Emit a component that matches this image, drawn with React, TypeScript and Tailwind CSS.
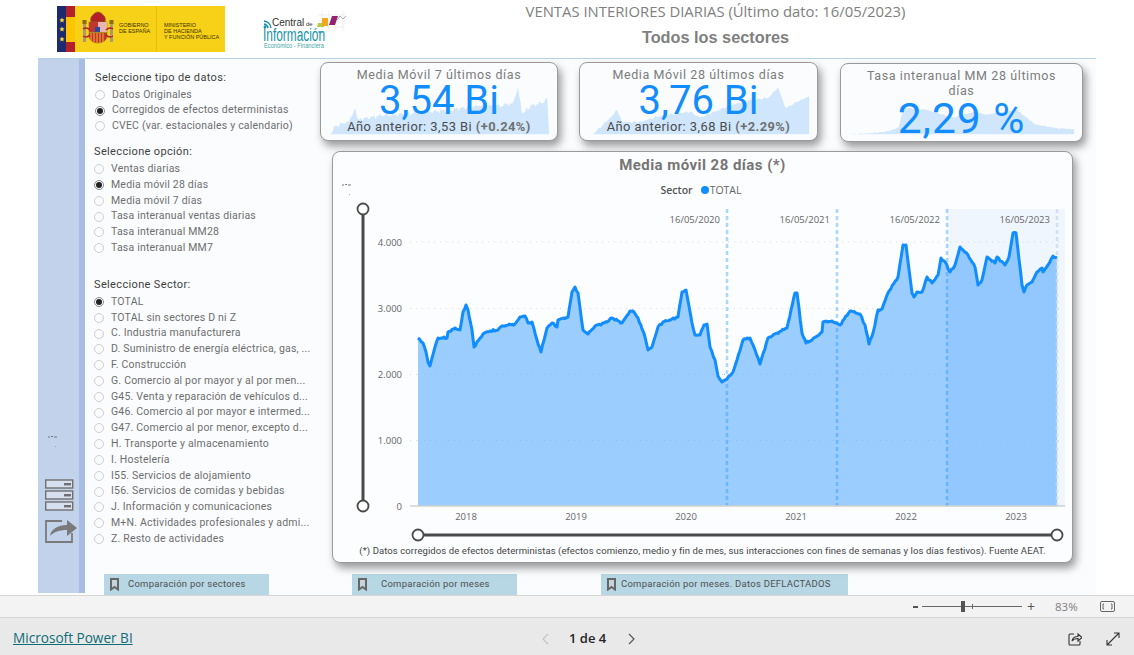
import React from "react";

type P = [number, number];

function jag(pts: P[], amp: number, step: number, seed: number): P[] {
  const out: P[] = [];
  for (let i = 0; i < pts.length - 1; i++) {
    const [x0, y0] = pts[i];
    const [x1, y1] = pts[i + 1];
    const n = Math.max(1, Math.round((x1 - x0) / step));
    for (let k = 0; k < n; k++) {
      const t = k / n;
      const x = x0 + (x1 - x0) * t;
      const noise = k === 0 ? 0 : (Math.sin(x * 2.3 + seed) + Math.sin(x * 5.1 + seed * 2)) * amp;
      out.push([+x.toFixed(1), +(y0 + (y1 - y0) * t + noise).toFixed(1)]);
    }
  }
  out.push(pts[pts.length - 1]);
  return out;
}
const str = (a: P[]) => a.map((p) => p.join(",")).join(" ");

const lineRaw: P[] = [
  [418, 338], [423, 343], [426, 352], [428, 362], [430, 366], [432, 358], [435, 347], [438, 338], [447, 338], [448, 332], [455, 328], [460, 330], [463, 312], [466, 305], [468, 310], [472, 330], [474, 347], [483, 334], [490, 331], [498, 330], [502, 326], [515, 324], [520, 317], [525, 316], [528, 323], [532, 322], [537, 340], [541, 352], [547, 328], [552, 323], [557, 327], [558, 320], [568, 317], [572, 292], [575, 287], [578, 293], [583, 330], [588, 334], [595, 326], [607, 322], [612, 318], [622, 323], [630, 311], [633, 311], [638, 318], [645, 337], [648, 350], [652, 347], [658, 327], [663, 322], [670, 320], [678, 317], [682, 292], [686, 290], [692, 323], [695, 335], [700, 335], [704, 325], [707, 324], [710, 347], [715, 360], [718, 376], [722, 382], [727, 379], [733, 372], [737, 360], [743, 340], [750, 338], [755, 350], [760, 364], [768, 338], [777, 333], [787, 328], [791, 310], [795, 293], [797, 293], [802, 333], [806, 343], [812, 340], [822, 332], [823, 322], [832, 321], [840, 325], [850, 311], [860, 314], [865, 325], [869, 344], [873, 333], [878, 310], [882, 309], [888, 293], [898, 277], [903, 245], [906, 245], [912, 293], [914, 297], [917, 292], [922, 292], [927, 277], [932, 283], [938, 275], [941, 258], [945, 262], [950, 272], [955, 265], [960, 247], [968, 255], [975, 267], [978, 285], [982, 280], [987, 257], [995, 263], [997, 257], [1005, 265], [1009, 257], [1013, 233], [1016, 233], [1022, 285], [1024, 292], [1027, 285], [1032, 282], [1037, 272], [1042, 268], [1043, 272], [1048, 265], [1053, 256], [1057, 258],
];
const line = jag(lineRaw, 0.5, 1.5, 1.3);
const area = str([[418, 506], ...line, [1057, 506]]);

const spark1 = jag([[327, 135], [333, 127], [345, 122], [350, 116], [353, 108], [356, 120], [380, 116], [420, 113], [450, 110], [480, 106], [505, 106], [515, 102], [520, 87], [524, 114], [535, 105], [545, 103], [550, 98], [552, 135]], 1.5, 1.5, 2);
const spark2 = jag([[590, 135], [600, 126], [610, 116], [615, 110], [620, 123], [640, 122], [660, 116], [690, 112], [700, 118], [730, 106], [750, 100], [770, 98], [780, 87], [785, 100], [788, 108], [800, 102], [812, 96], [812, 135]], 0.7, 2, 3);
const spark3 = jag([[848, 135], [870, 134], [887, 132], [897, 128], [902, 108], [925, 110], [953, 118], [975, 112], [987, 115], [1005, 112], [1018, 110], [1037, 125], [1060, 129], [1077, 130], [1077, 136]], 0.3, 2, 4);

const font = { fontFamily: "Roboto, 'Liberation Sans', sans-serif" };

function Radio({ label, on }: { label: string; on?: boolean }) {
  return (
    <div className="flex h-[15.8px] items-center gap-[7px] whitespace-nowrap text-[10.5px] leading-none tracking-[0.2px] text-[#6e6e6e]">
      <span className={`flex h-[10px] w-[10px] shrink-0 items-center justify-center rounded-full border ${on ? "border-[#8a8a8a]" : "border-[#cfcfcf]"}`}>
        {on && <span className="h-[6px] w-[6px] rounded-full bg-[#222]" />}
      </span>
      {label}
    </div>
  );
}

function Heading({ children }: { children: React.ReactNode }) {
  return <div className="h-[16px] text-[11px] font-normal leading-[16px] tracking-[0.35px] text-[#3f3f3f]">{children}</div>;
}

function Kpi({ title, value, prev, pct, spark, box, w, third }: { title: string; value: string; prev?: string; pct?: string; spark: P[]; box: string; w: string; third?: boolean }) {
  return (
    <div className={`relative ${w} h-[79px] overflow-hidden rounded-[8px] border border-[#9a9a9a] bg-[#fbfcfe] shadow-[3px_5px_8px_rgba(0,0,0,0.4)]`}>
      <svg className="absolute inset-0 h-full w-full" viewBox={box}>
        <polygon points={str([...spark, [spark[spark.length - 1][0], 135], [spark[0][0], 135]])} fill="#cfe6fc" />
      </svg>
      <div className={`relative flex flex-col items-center ${third ? "px-5 pt-[4px]" : "pt-[4px]"}`}>
        <div className="text-center text-[12.5px] font-normal leading-[15px] tracking-[0.6px] text-[#7c7c7c]">{title}</div>
        {third ? (
          <div className="text-[42.5px] leading-[42px] tracking-[1px] text-[#118dff]">{value}</div>
        ) : (
          <div className="mt-[1px] text-[40px] leading-[36px] tracking-[0px] text-[#118dff]">{value}</div>
        )}
        {prev && (
          <div className="text-[12.9px] leading-[15px] tracking-[0.45px] text-[#4a4a4a]">
            {prev} <span className="font-bold text-[#707070]">{pct}</span>
          </div>
        )}
      </div>
    </div>
  );
}

function Bookmark({ label, w, ml, tl }: { label: string; w: string; ml: string; tl: string }) {
  return (
    <div className={`flex h-[21px] ${w} ${ml} items-center bg-[#b7d7e5] pl-[6px]`}>
      <svg width="9" height="13" viewBox="0 0 9 13" className="shrink-0">
        <path d="M1 1h7v10.5L4.5 9 1 11.5z" fill="#c6d4dc" stroke="#666" strokeWidth="2" />
      </svg>
      <span className={`${tl} whitespace-nowrap text-[9.5px] font-normal tracking-[0.25px] text-[#4f4f4f]`}>{label}</span>
    </div>
  );
}

function GovLogo() {
  return (
    <div className="relative h-[46px] w-[168px] shrink-0 bg-[#f7d117]">
      <svg className="absolute inset-0" width="168" height="46" viewBox="57 6 168 46">
        <rect x="57" y="6" width="9" height="46" fill="#1c2a6e" />
        <rect x="66" y="6" width="9" height="46" fill="#b3202a" />
        <rect x="66" y="17" width="9" height="25" fill="#fdc400" />
        <path d="M62 17.5l.8 1.8 1.8.2-1.4 1.2.5 1.8-1.7-1-1.7 1 .5-1.8-1.4-1.2 1.8-.2zM62 26.5l.8 1.8 1.8.2-1.4 1.2.5 1.8-1.7-1-1.7 1 .5-1.8-1.4-1.2 1.8-.2zM62 36.5l.8 1.8 1.8.2-1.4 1.2.5 1.8-1.7-1-1.7 1 .5-1.8-1.4-1.2 1.8-.2z" fill="#fdd835" />
        <path d="M91 22c-1-3 0-6 2-7 1-2 4-3 5-3 1 0 4 1 5 3 2 1 3 4 2 7z" fill="#b3202a" stroke="#8a6a14" strokeWidth=".7" />
        <path d="M89 22h18v14c0 4-4 7-9 7s-9-3-9-7z" fill="#c4352e" stroke="#8a6a14" strokeWidth=".5" />
        <rect x="98" y="22" width="9" height="10" fill="#e8b6b0" />
        <rect x="89" y="32" width="18" height="1" fill="#a78a22" />
        <path d="M91 33v8M94 33v9M97 33v10M100 33v10M103 33v9" stroke="#f2c230" strokeWidth=".9" />
        <rect x="95" y="27" width="5" height="5" fill="#2d4a9a" />
        <rect x="83" y="24" width="3" height="18" fill="#a89a6a" />
        <rect x="110" y="24" width="3" height="18" fill="#a89a6a" />
        <rect x="82.5" y="20" width="4" height="4" fill="#8a6a14" />
        <rect x="109.5" y="20" width="4" height="4" fill="#8a6a14" />
        <path d="M83 29c3-2 5-1 7 1M113 29c-3-2-5-1-7 1M83 36c3 2 5 1 7-1M113 36c-3 2-5 1-7-1" stroke="#b3202a" strokeWidth="1.5" fill="none" />
        <rect x="156" y="6" width=".7" height="46" fill="#e6b800" />
      </svg>
      <div className="absolute left-[62px] top-[16px] text-[5.5px] leading-[6px] text-[#3a3000]" style={{ fontFamily: "'Liberation Sans', sans-serif" }}>
        GOBIERNO<br />DE ESPAÑA
      </div>
      <div className="absolute left-[107px] top-[16px] text-[5.5px] leading-[6.2px] text-[#3a3000]" style={{ fontFamily: "'Liberation Sans', sans-serif" }}>
        MINISTERIO<br />DE HACIENDA<br />Y FUNCIÓN PÚBLICA
      </div>
    </div>
  );
}

function CentralLogo() {
  return (
    <div className="relative ml-[38px] h-[42px] w-[84px] shrink-0 self-end" style={{ fontFamily: "'Liberation Sans', sans-serif" }}>
      <svg className="absolute inset-0" width="84" height="42" viewBox="263 10 84 42">
        <g stroke="#e6e6e6" strokeWidth=".6">
          <path d="M322 11v20M329 11v20M336 11v20M343 11v20M318 15h27M318 21h27M318 27h27" />
        </g>
        <path d="M317 27l1-4h6v4z" fill="#b7cf3a" />
        <path d="M322 26l0-8h6v8z" fill="#f2a81d" />
        <path d="M329 25l3-9h6l-3 9z" fill="#94206e" />
        <path d="M337 20l3-4 3 3 3-3" fill="none" stroke="#aaa" strokeWidth="1" />
        <path d="M264 21a8 8 0 0 1 7 7M264 24a5 5 0 0 1 4 4" fill="none" stroke="#1792a8" strokeWidth="1.4" />
        <circle cx="265" cy="27" r="1.4" fill="#1792a8" />
        <path d="M318 32h5" stroke="#1792a8" strokeWidth="1" />
      </svg>
      <span className="absolute left-[9px] top-[8px] h-[10px] whitespace-nowrap text-[10px] leading-[10px] text-[#333]">
        Central<span className="text-[6px]"> de</span>
      </span>
      <span className="absolute left-0 top-[18px] h-[14px] origin-left scale-x-[0.66] whitespace-nowrap text-[18px] font-normal leading-[14px] text-[#1792a8]">
        Información
      </span>
      <span className="absolute left-[1px] top-[32px] h-[7px] origin-left scale-x-[0.76] whitespace-nowrap text-[7.5px] leading-[7px] text-[#3fa7a7]">
        Económico - Financiera
      </span>
    </div>
  );
}

const yTicks: [string, number][] = [["4.000", 242], ["3.000", 308.5], ["2.000", 374.5], ["1.000", 440.5], ["0", 506]];
const years: [string, number][] = [["2018", 466], ["2019", 576], ["2020", 686], ["2021", 796], ["2022", 906], ["2023", 1016]];
const marks: [string, number][] = [["16/05/2020", 727], ["16/05/2021", 837], ["16/05/2022", 947], ["16/05/2023", 1057]];

const sectors = [
  "TOTAL", "TOTAL sin sectores D ni Z", "C. Industria manufacturera", "D. Suministro de energía eléctrica, gas, ...", "F. Construcción", "G. Comercio al por mayor y al por men...", "G45. Venta y reparación de vehículos d...", "G46. Comercio al por mayor e intermed...", "G47. Comercio al por menor, excepto d...", "H. Transporte y almacenamiento", "I. Hostelería", "I55. Servicios de alojamiento", "I56. Servicios de comidas y bebidas", "J. Información y comunicaciones", "M+N. Actividades profesionales y admi...", "Z. Resto de actividades",
];

function Chart() {
  const axis = { fontFamily: "'Open Sans', sans-serif", fontSize: 9.5, fill: "#666" };
  return (
    <svg width="739" height="345" viewBox="333 200 739 345" className="block">
      <defs>
        <clipPath id="hl"><rect x="947" y="200" width="118" height="310" /></clipPath>
      </defs>
      <rect x="947" y="209" width="118" height="297" fill="#eff6fe" />
      {yTicks.slice(0, 4).map(([l, y]) => (
        <line key={l} x1="410" x2="1062" y1={y} y2={y} stroke="#d9d9d9" strokeWidth="1" strokeDasharray="1 5" />
      ))}
      <polygon points={area} fill="#9bcdfe" />
      <polygon points={area} fill="#93c8fe" clipPath="url(#hl)" />
      {yTicks.slice(2, 4).map(([l, y]) => (
        <line key={l} x1="418" x2="1057" y1={y} y2={y} stroke="#8fc0f0" strokeWidth="1" strokeDasharray="1 5" />
      ))}
      {marks.map(([l, x], i) => (
        <g key={l}>
          <line x1={x} x2={x} y1="209" y2="506" stroke={i === 3 ? "#c9dcef" : "#118dff"} strokeOpacity={i === 3 ? 0.8 : 0.35} strokeWidth="2.5" strokeDasharray="4 3" />
          <text x={x - 7} y="223" textAnchor="end" style={axis}>{l}</text>
        </g>
      ))}
      <polyline points={str(line)} fill="none" stroke="#118dff" strokeWidth="3" strokeLinejoin="round" />
      <line x1="410" x2="1065" y1="506" y2="506" stroke="#cfcfcf" strokeWidth="1.5" />
      {yTicks.map(([l, y]) => (
        <text key={l} x="402" y={y + 3.5} textAnchor="end" style={axis}>{l}</text>
      ))}
      {years.map(([l, x]) => (
        <text key={l} x={x} y="519.5" textAnchor="middle" style={axis}>{l}</text>
      ))}
      <line x1="363" x2="363" y1="209" y2="506" stroke="#4a4a4a" strokeWidth="3" />
      <circle cx="363" cy="209" r="5.5" fill="#fff" stroke="#4a4a4a" strokeWidth="1.8" />
      <circle cx="363" cy="506" r="5.5" fill="#fff" stroke="#4a4a4a" strokeWidth="1.8" />
      <line x1="418" x2="1057" y1="535" y2="535" stroke="#4a4a4a" strokeWidth="3" />
      <circle cx="418" cy="535" r="5.5" fill="#fff" stroke="#4a4a4a" strokeWidth="1.8" />
      <circle cx="1057" cy="535" r="5.5" fill="#fff" stroke="#4a4a4a" strokeWidth="1.8" />
    </svg>
  );
}

function Speck() {
  return (
    <svg width="10" height="14" viewBox="0 0 10 14" className="block">
      <path d="M0 2h2M3 1.5h2M6 2h3" stroke="#777" strokeWidth="1" />
      <rect x="7" y="11" width="1" height="1" fill="#aaa" />
    </svg>
  );
}

export default function App() {
  return (
    <div className="flex h-[655px] w-[1134px] flex-col overflow-hidden bg-white" style={font}>
      <header className="flex h-[58px] shrink-0">
        <div className="flex h-[52px] items-start pl-[57px] pt-[6px]">
          <GovLogo />
          <CentralLogo />
        </div>
        <div className="ml-[178px] flex w-[381px] flex-col items-center" style={{ fontFamily: "'Open Sans', sans-serif" }}>
          <div className="h-[22px] whitespace-nowrap text-[14.85px] leading-[22px] text-[#808080]">VENTAS INTERIORES DIARIAS (Último dato: 16/05/2023)</div>
          <div className="mt-[5px] whitespace-nowrap text-[16.3px] font-bold leading-[20px] text-[#7f7f7f]" style={{ fontFamily: "'Liberation Sans', sans-serif" }}>Todos los sectores</div>
        </div>
      </header>

      <main className="ml-[38px] flex h-[537px] w-[1058px] shrink-0 border-t border-[#b5d3ea] bg-[#fbfcfe]">
        <aside className="flex h-[534px] w-[47px] shrink-0 flex-col items-start border-r-[6px] border-[#a7bde3] bg-[#c1d2ea] pl-[7px]">
          <div className="ml-[3px] mt-[376px]"><Speck /></div>
          <svg width="34" height="66" viewBox="45 481 34 66" className="mt-[30px]">
            {[482, 493, 504].map((y) => (
              <g key={y}>
                <rect x="45.7" y={y} width="27" height="8" fill="#d6e0ef" stroke="#6f6f6f" strokeWidth="1.4" />
                <rect x="64" y={y + 3} width="7" height="2.4" fill="#6f6f6f" />
              </g>
            ))}
            <path d="M62 523H46v21h26v-9" fill="none" stroke="#7a7a7a" strokeWidth="1.8" />
            <path d="M50 538c1-7 8-11 17-11v-5l10 8-10 8v-6c-8 0-13 2-17 6z" fill="#7a7a7a" />
          </svg>
        </aside>

        <div className="flex min-w-0 flex-1 flex-col">
          <div className="flex h-[514px] shrink-0">
            <section className="flex w-[235px] shrink-0 flex-col pl-[10px] pt-[11px]">
              <Heading>Seleccione tipo de datos:</Heading>
              <div className="mt-[1px]">
                <Radio label="Datos Originales" />
                <Radio label="Corregidos de efectos deterministas" on />
                <Radio label="CVEC (var. estacionales y calendario)" />
              </div>
              <div className="mt-[10px] -ml-[1px]"><Heading>Seleccione opción:</Heading></div>
              <div className="-ml-[1px] mt-[1px]">
                {["Ventas diarias", "Media móvil 28 días", "Media móvil 7 días", "Tasa interanual ventas diarias", "Tasa interanual MM28", "Tasa interanual MM7"].map((l, i) => (
                  <Radio key={l} label={l} on={i === 1} />
                ))}
              </div>
              <div className="-ml-[1px] mt-[21px]"><Heading>Seleccione Sector:</Heading></div>
              <div className="-ml-[1px] mt-[1px]">
                {sectors.map((l, i) => <Radio key={l} label={l} on={i === 0} />)}
              </div>
            </section>

            <section className="flex min-w-0 flex-1 flex-col pt-[3px]">
              <div className="flex items-start">
                <Kpi w="w-[238px]" box="320 62 238 79" title="Media Móvil 7 últimos días" value="3,54 Bi" prev="Año anterior: 3,53 Bi" pct="(+0.24%)" spark={spark1} />
                <div className="ml-[21px]">
                  <Kpi w="w-[239px]" box="579 62 239 79" title="Media Móvil 28 últimos días" value="3,76 Bi" prev="Año anterior: 3,68 Bi" pct="(+2.29%)" spark={spark2} />
                </div>
                <div className="ml-[22px] mt-[1px]">
                  <Kpi third w="w-[243px]" box="840 63 243 79" title="Tasa interanual MM 28 últimos días" value="2,29 %" spark={spark3} />
                </div>
              </div>
              <div className="relative ml-[12px] mt-[9px] h-[412px] w-[741px] rounded-[8px] border border-[#9a9a9a] bg-[#fcfdff] shadow-[3px_5px_9px_rgba(0,0,0,0.4)]">
                <div className="absolute left-[9px] top-[31px]"><Speck /></div>
                <div className="pt-[3px] text-center text-[15px] font-bold leading-[20px] tracking-[0.45px] text-[#757575]">Media móvil 28 días (*)</div>
                <div className="mt-[7px] flex h-[18px] items-start justify-center gap-[4px] pr-[3px] text-[10.5px] leading-[16px] text-[#666]" style={{ fontFamily: "'Open Sans', sans-serif" }}>
                  <span className="mr-[4px] font-semibold text-[#555]">Sector</span>
                  <span className="mt-[4px] h-[8px] w-[8px] rounded-full bg-[#118dff]" />
                  <span className="-ml-[3px]">TOTAL</span>
                </div>
                <Chart />
                <div className="-mt-[1px] whitespace-nowrap text-center text-[9.5px] leading-[14px] tracking-[0.09px] text-[#444]">
                  (*) Datos corregidos de efectos deterministas (efectos comienzo, medio y fin de mes, sus interacciones con fines de semanas y los días festivos). Fuente AEAT.
                </div>
              </div>
            </section>
          </div>
          <div className="mt-[1px] flex">
            <Bookmark w="w-[165px]" ml="ml-[19px]" tl="ml-[9px]" label="Comparación por sectores" />
            <Bookmark w="w-[165px]" ml="ml-[83px]" tl="ml-[14px]" label="Comparación por meses" />
            <Bookmark w="w-[247px]" ml="ml-[84px]" tl="ml-[5px]" label="Comparación por meses. Datos DEFLACTADOS" />
          </div>
        </div>
      </main>

      <div className="flex h-[23px] shrink-0 items-center border-y border-[#d6d6d6] bg-[#f3f3f3] pl-[913px]" style={{ fontFamily: "'Open Sans', sans-serif" }}>
        <span className="h-[2px] w-[5px] bg-[#555]" />
        <div className="relative ml-[4px] h-[1px] w-[100px] bg-[#666]">
          <span className="absolute left-[39px] top-[-5px] h-[11px] w-[4px] bg-[#555]" />
          <span className="absolute left-[50px] top-[-2px] h-[5px] w-[1px] bg-[#666]" />
        </div>
        <span className="ml-[5px] text-[14px] leading-none text-[#555]">+</span>
        <span className="ml-[20px] text-[11.5px] text-[#808080]">83%</span>
        <svg width="15" height="11" viewBox="0 0 15 11" className="ml-[22px]">
          <rect x=".5" y=".5" width="14" height="10" rx="1.5" fill="none" stroke="#666" />
          <path d="M4 3H3v5h1M11 3h1v5h-1" fill="none" stroke="#666" />
        </svg>
      </div>

      <footer className="flex flex-1 items-center bg-[#e9e9e9] pt-[4px]" style={{ fontFamily: "'Open Sans', sans-serif" }}>
        <a className="ml-[13px] w-[120px] whitespace-nowrap text-[13.6px] text-[#0e6d78] underline">Microsoft Power BI</a>
        <svg width="8" height="12" viewBox="0 0 8 12" className="ml-[408px]"><path d="M7 1L2 6l5 5" fill="none" stroke="#c4c4c4" strokeWidth="1.2" /></svg>
        <span className="ml-[20px] w-[38px] whitespace-nowrap text-[13px] font-semibold text-[#252525]">1 de 4</span>
        <svg width="8" height="12" viewBox="0 0 8 12" className="ml-[21px]"><path d="M1 1l5 5-5 5" fill="none" stroke="#555" strokeWidth="1.2" /></svg>
        <svg width="14" height="14" viewBox="0 0 14 14" className="ml-[432px]">
          <path d="M6 2H2a1 1 0 0 0-1 1v9a1 1 0 0 0 1 1h9a1 1 0 0 0 1-1V9" fill="none" stroke="#333" strokeWidth="1.1" />
          <path d="M4 9c.5-3 3-4.5 6-4.5V2l4 3.5L10 9V6.5C8 6.5 5.5 7 4 9z" fill="none" stroke="#333" strokeWidth="1.1" />
        </svg>
        <svg width="14" height="14" viewBox="0 0 14 14" className="ml-[24px]">
          <path d="M1 13L13 1M8 1h5v5M1 8v5h5" fill="none" stroke="#333" strokeWidth="1.1" />
        </svg>
      </footer>
    </div>
  );
}
